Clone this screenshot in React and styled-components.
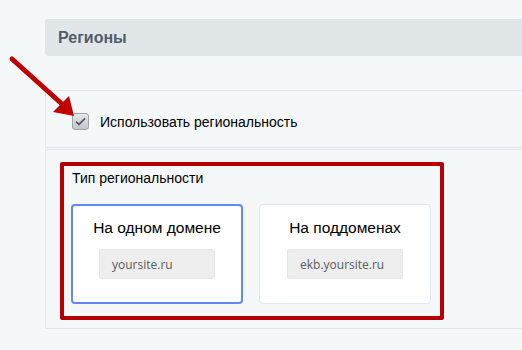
import React from 'react';
import styled, { createGlobalStyle } from 'styled-components';

const GlobalStyle = createGlobalStyle`
  html, body {
    margin: 0;
    padding: 0;
    background: #f5f8f9;
    overflow: hidden;
  }
  body {
    font-family: "Liberation Sans", Arial, sans-serif;
  }
`;

const options = [
  { id: 'single', title: 'На одном домене', example: 'yoursite.ru', active: true },
  { id: 'sub', title: 'На поддоменах', example: 'ekb.yoursite.ru', active: false },
];

const App = () => (
  <>
    <GlobalStyle />
    <Page>
      <SectionHeader>Регионы</SectionHeader>

      <Panel $first>
        <CheckRow>
          <CheckBox>
            <svg width="11" height="9" viewBox="0 0 11 9">
              <path d="M1 4.6 L4 7.4 L10 1.4" fill="none" stroke="#5a5e63" strokeWidth="1.8" />
            </svg>
          </CheckBox>
          <CheckLabel>Использовать региональность</CheckLabel>
        </CheckRow>
      </Panel>

      <Panel>
        <Highlight>
          <FieldLabel>Тип региональности</FieldLabel>
          <CardGrid>
            {options.map((opt) => (
              <DomainCard key={opt.id} $active={opt.active}>
                <CardTitle>{opt.title}</CardTitle>
                <DomainPill>{opt.example}</DomainPill>
              </DomainCard>
            ))}
          </CardGrid>
        </Highlight>
      </Panel>

      <Arrow width="90" height="125" viewBox="0 0 90 125">
        <line x1="12" y1="59" x2="62" y2="104" stroke="#c00000" strokeWidth="5" strokeLinecap="round" />
        <polygon points="74,116 53,112 69,96" fill="#c00000" />
      </Arrow>
    </Page>
  </>
);

const Page = styled.div`
  position: relative;
  padding: 19px 0 0 45px;
`;

const SectionHeader = styled.div`
  height: 37px;
  display: flex;
  align-items: center;
  padding-left: 13px;
  margin-right: -10px;
  background: #e1e7e9;
  border-radius: 3px 0 0 3px;
  color: #535c69;
  font-size: 16px;
  font-weight: bold;
`;

const Panel = styled.div`
  margin-top: ${(p) => (p.$first ? '34px' : '1px')};
  margin-right: -10px;
  border: 1px solid #dfe7ec;
  border-right: none;
  border-radius: 2px 0 0 2px;
  background: #f5f8f9;
`;

const CheckRow = styled.div`
  display: flex;
  align-items: center;
  gap: 11px;
  padding: 22px 0 17px 26px;
`;

const CheckBox = styled.span`
  width: 17px;
  height: 17px;
  box-sizing: border-box;
  display: flex;
  align-items: center;
  justify-content: center;
  border: 1px solid #9da3a9;
  border-radius: 3px;
  background: linear-gradient(#e4e6e8, #c5c8cb);
`;

const CheckLabel = styled.span`
  font-size: 14px;
  color: #000;
`;

const Highlight = styled.div`
  margin: 12px 0 8px 14px;
  width: 384px;
  box-sizing: border-box;
  border: 4px solid #b70000;
  border-radius: 2px;
  padding: 4px 8px 12px 7px;
`;

const FieldLabel = styled.div`
  font-size: 14px;
  line-height: 16px;
  color: #000;
  padding-left: 1px;
`;

const CardGrid = styled.div`
  display: grid;
  grid-template-columns: 172px 172px;
  gap: 16px;
  margin-top: 18px;
`;

const DomainCard = styled.div`
  height: 100px;
  box-sizing: border-box;
  display: flex;
  flex-direction: column;
  align-items: center;
  padding-top: ${(p) => (p.$active ? '12px' : '13px')};
  background: #fff;
  border: ${(p) => (p.$active ? '2px solid #6388fb' : '1px solid #e0e8ee')};
  border-radius: 4px;
`;

const CardTitle = styled.div`
  font-size: 15.5px;
  line-height: 20px;
  color: #000;
`;

const DomainPill = styled.div`
  margin-top: 11px;
  width: 116px;
  height: 30px;
  box-sizing: border-box;
  display: flex;
  align-items: center;
  padding-left: 12px;
  background: #eeeeee;
  border: 1px solid #e6e6e6;
  border-radius: 2px;
  font-family: "Open Sans", "Liberation Sans", sans-serif;
  font-size: 12px;
  color: #5a5a5a;
`;

const Arrow = styled.svg`
  position: absolute;
  left: 0;
  top: 0;
  pointer-events: none;
`;

export default App;
